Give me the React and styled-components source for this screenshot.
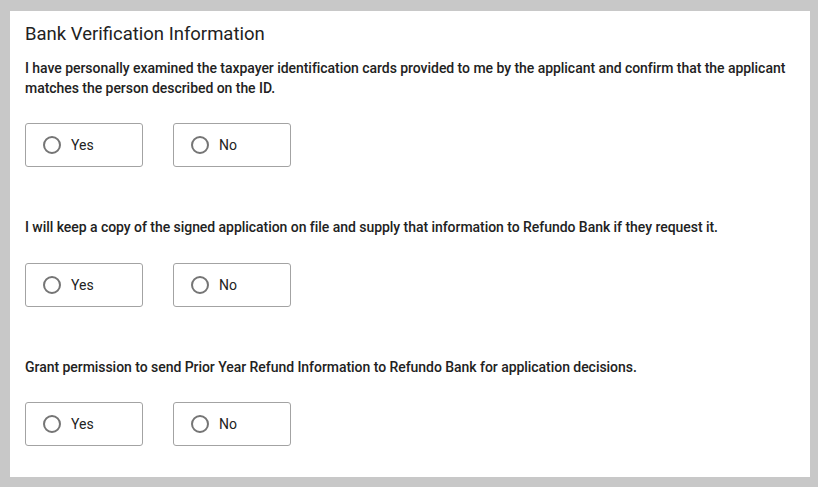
import React from "react";
import styled, { createGlobalStyle } from "styled-components";

const GlobalStyle = createGlobalStyle`
  html, body {
    margin: 0;
    padding: 0;
    background: #c8c8c8;
    font-family: Roboto, "Liberation Sans", sans-serif;
  }
`;

const questions = [
  "I have personally examined the taxpayer identification cards provided to me by the applicant and confirm that the applicant matches the person described on the ID.",
  "I will keep a copy of the signed application on file and supply that information to Refundo Bank if they request it.",
  "Grant permission to send Prior Year Refund Information to Refundo Bank for application decisions.",
];

const Page = styled.div`
  padding: 11px 8px 10px 10px;
  height: 487px;
  box-sizing: border-box;
`;

const Panel = styled.div`
  background: #fff;
  height: 466px;
  box-sizing: border-box;
  padding: 12px 15px 0 15px;
`;

const Title = styled.h2`
  margin: 0;
  font-size: 18.5px;
  line-height: 22px;
  font-weight: 400;
  color: #222;
`;

const Section = styled.div`
  margin-top: ${(p) => (p.first ? "13px" : "50px")};
`;

const Question = styled.p`
  margin: 0;
  font-size: 14px;
  line-height: 20px;
  font-weight: 500;
  letter-spacing: -0.045px;
  color: #222;
`;

const Options = styled.div`
  display: flex;
  gap: 30px;
  margin-top: ${(p) => (p.tight ? "25px" : "26px")};
`;

const Option = styled.label`
  width: 118px;
  height: 44px;
  box-sizing: border-box;
  border: 1px solid #a3a3a3;
  border-radius: 3px;
  display: flex;
  align-items: center;
  padding: 0 0 1px 17px;
  gap: 10px;
  font-size: 14px;
  color: #222;
  cursor: pointer;
`;

const Radio = styled.span`
  width: 18px;
  height: 18px;
  box-sizing: border-box;
  border: 2px solid #757575;
  border-radius: 50%;
  flex-shrink: 0;
`;

const App = () => {
  return (
    <>
      <GlobalStyle />
      <Page>
        <Panel>
          <Title>Bank Verification Information</Title>
          {questions.map((q, i) => (
            <Section key={i} first={i === 0}>
              <Question>{q}</Question>
              <Options tight={i !== 1}>
                <Option>
                  <Radio />
                  Yes
                </Option>
                <Option>
                  <Radio />
                  No
                </Option>
              </Options>
            </Section>
          ))}
        </Panel>
      </Page>
    </>
  );
};

export default App;
